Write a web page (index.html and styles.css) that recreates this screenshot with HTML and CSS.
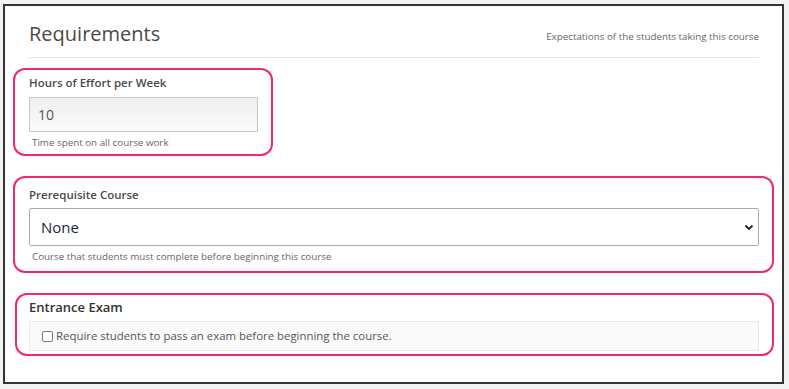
FILE: index.html
```html
<!DOCTYPE html>
<html lang="en">
<head>
    <meta charset="UTF-8">
    <meta name="viewport" content="width=device-width, initial-scale=1.0">
    <title>Requirements</title>
    <link rel="stylesheet" href="styles.css">
</head>
<body>
    <div class="panel">
        <div class="panel-header">
            <h2>Requirements</h2>
            <span class="subtitle">Expectations of the students taking this course</span>
        </div>

        <div class="field highlight hours">
            <label for="hours">Hours of Effort per Week</label>
            <input type="text" id="hours" class="text-input" value="10">
            <div class="help">Time spent on all course work</div>
        </div>

        <div class="field highlight prereq">
            <label for="prereq">Prerequisite Course</label>
            <div class="select-wrap">
                <select id="prereq" class="select-input">
                    <option>None</option>
                </select>
                <svg class="chevron" width="10" height="7" viewBox="0 0 10 7">
                    <path d="M1.5 1.5 L5 5 L8.5 1.5" fill="none" stroke="#222" stroke-width="1.8"/>
                </svg>
            </div>
            <div class="help">Course that students must complete before beginning this course</div>
        </div>

        <div class="field highlight exam">
            <div class="field-title">Entrance Exam</div>
            <div class="check-well">
                <label class="check-label">
                    <input type="checkbox" class="check-box">
                    Require students to pass an exam before beginning the course.
                </label>
            </div>
        </div>
    </div>
</body>
</html>
```

FILE: styles.css
```css
body {
    font-family: "Open Sans", Arial, sans-serif;
    margin: 0;
    background-color: #f3f3f3;
}
.panel {
    background: white;
    border: 2px solid #333;
    margin: 4px 5px 5px 3px;
    padding: 14px 23px 26px 24px;
}
.panel-header {
    display: flex;
    justify-content: space-between;
    align-items: center;
    padding-bottom: 9px;
    border-bottom: 1px solid #e6e6e6;
    margin-bottom: 10px;
}
.panel-header h2 {
    margin: 0;
    font-size: 20px;
    line-height: 28px;
    font-weight: 400;
    color: #4a4a4a;
}
.subtitle {
    font-size: 9.8px;
    color: #666;
    padding-top: 4px;
}
.highlight {
    border: 2px solid #ec2a6f;
    border-radius: 12px;
    margin: 0 -15px 0 -16px;
}
.field label,
.field-title {
    display: block;
    font-size: 11.5px;
    line-height: 16px;
    font-weight: 600;
    color: #4a4a4a;
}
.hours {
    width: fit-content;
    padding: 5px 13px 4px 14px;
}
.prereq {
    margin-top: 20px;
    padding: 9px 13px 7px 14px;
}
.exam {
    margin-top: 20px;
    margin-left: -14px;
    padding: 3px 13px 3px 12px;
}
.text-input {
    display: block;
    box-sizing: border-box;
    width: 229px;
    height: 35px;
    margin-top: 6px;
    padding: 0 8px;
    border: 1px solid #c6c6c6;
    border-radius: 1px;
    background: linear-gradient(to bottom, #f0f0f0, #fafafa);
    font-family: inherit;
    font-size: 14px;
    color: #555;
}
.help {
    margin-top: 4px;
    padding-left: 3px;
    font-size: 9.8px;
    line-height: 14px;
    color: #666;
}
.select-wrap {
    position: relative;
    margin-top: 5px;
}
.select-input {
    display: block;
    box-sizing: border-box;
    width: 100%;
    height: 38px;
    padding: 0 11px;
    border: 1px solid #ababab;
    border-radius: 2px;
    background: white;
    appearance: none;
    font-family: inherit;
    font-size: 15px;
    color: #1e1e3c;
}
.chevron {
    position: absolute;
    right: 5px;
    top: 16px;
}
.field .field-title {
    font-size: 13px;
    line-height: 18px;
    color: #333;
}
.check-well {
    margin-top: 5px;
    height: 28px;
    display: flex;
    align-items: center;
    padding-left: 12px;
    border: 1px solid #e8e8e8;
    background: #fafafa;
}
.field .check-label {
    display: flex;
    align-items: center;
    gap: 3px;
    font-size: 11.4px;
    font-weight: 400;
    color: #555;
}
.check-box {
    appearance: none;
    width: 11px;
    height: 11px;
    margin: 0;
    border: 1px solid #777;
    border-radius: 2px;
    background: white;
}
```
